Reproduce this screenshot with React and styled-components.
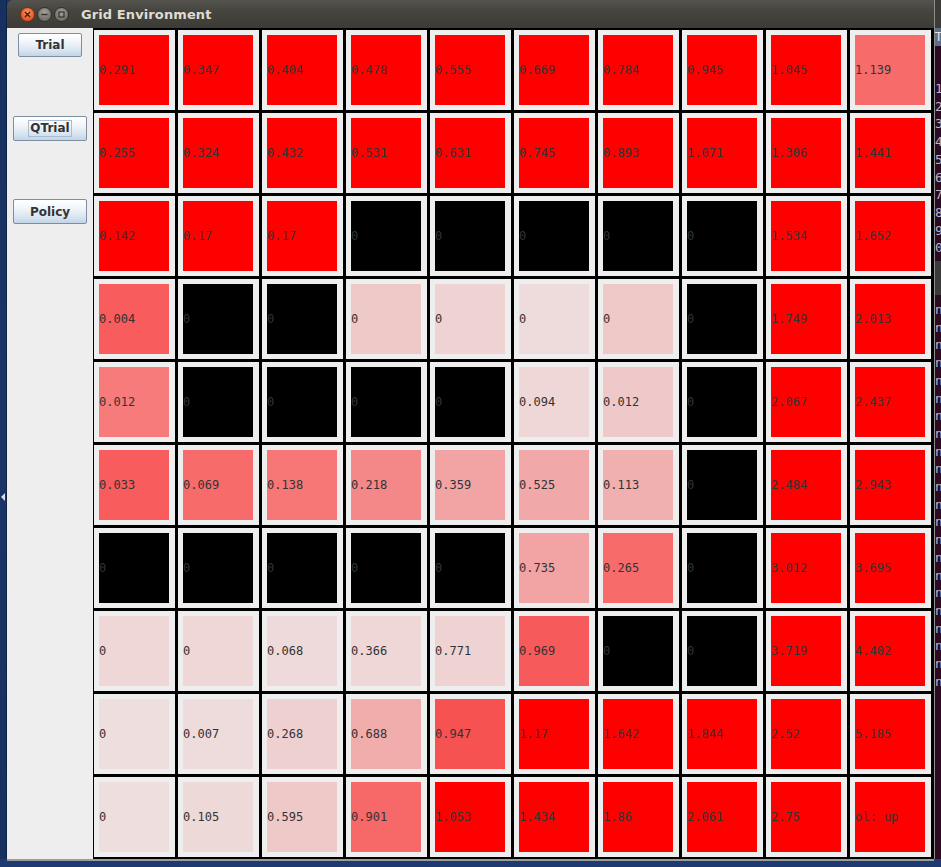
import React from "react";
import styled, { createGlobalStyle } from "styled-components";

const Global = createGlobalStyle`
  html, body { margin: 0; padding: 0; background: #1a3263; }
  #root { width: 941px; height: 867px; overflow: hidden; }
`;

const R = "#ff0000";
const B = "#000000";

const colors = [
  [R, R, R, R, R, R, R, R, R, "#f76b6b"],
  [R, R, R, R, R, R, R, R, R, R],
  [R, R, R, B, B, B, B, B, R, R],
  ["#f85c5c", B, B, "#efc8c8", "#efd3d3", "#eedcdc", "#efc8c8", B, R, R],
  ["#f77b7b", B, B, B, B, "#efd7d7", "#efc9c9", B, R, R],
  ["#f85c5c", "#f76b6b", "#f77676", "#f48888", "#f2a4a4", "#f0a8a8", "#f1b0b0", B, R, R],
  [B, B, B, B, B, "#f2a4a4", "#f76b6b", B, R, R],
  ["#efd7d7", "#efd7d7", "#eedada", "#efd7d7", "#efd3d3", "#f65a5a", B, B, R, R],
  ["#eedede", "#eedcdc", "#efd0d0", "#f1acac", "#f65252", R, R, R, R, R],
  ["#eedede", "#eed9d9", "#efc8c8", "#f76868", R, R, R, R, R, R],
];

const values = [
  ["0.291", "0.347", "0.404", "0.478", "0.555", "0.669", "0.784", "0.945", "1.045", "1.139"],
  ["0.255", "0.324", "0.432", "0.531", "0.631", "0.745", "0.893", "1.071", "1.306", "1.441"],
  ["0.142", "0.17", "0.17", "0", "0", "0", "0", "0", "1.534", "1.652"],
  ["0.004", "0", "0", "0", "0", "0", "0", "0", "1.749", "2.013"],
  ["0.012", "0", "0", "0", "0", "0.094", "0.012", "0", "2.067", "2.437"],
  ["0.033", "0.069", "0.138", "0.218", "0.359", "0.525", "0.113", "0", "2.484", "2.943"],
  ["0", "0", "0", "0", "0", "0.735", "0.265", "0", "3.012", "3.695"],
  ["0", "0", "0.068", "0.366", "0.771", "0.969", "0", "0", "3.719", "4.402"],
  ["0", "0.007", "0.268", "0.688", "0.947", "1.17", "1.642", "1.844", "2.52", "5.185"],
  ["0", "0.105", "0.595", "0.901", "1.053", "1.434", "1.86", "2.061", "2.75", "ol: up"],
];

const Screen = styled.div`
  width: 941px;
  height: 867px;
  display: flex;
  flex-direction: column;
  background: linear-gradient(180deg, #1c3668 0%, #1a3263 60%, #1d3a72 100%);
  overflow: hidden;
`;

const Main = styled.div`
  display: flex;
  height: 859px;
`;

const DesktopEdge = styled.div`
  width: 7px;
  flex: none;
  position: relative;
  background: linear-gradient(180deg, #17305f, #1a3468 50%, #17305f);
  border-right: 1px solid #0f2248;
  box-sizing: border-box;
`;

const Arrow = styled.div`
  position: absolute;
  left: 1px;
  top: 493px;
  width: 0;
  height: 0;
  border-top: 4px solid transparent;
  border-bottom: 4px solid transparent;
  border-right: 4px solid #d8dde6;
`;

const Window = styled.div`
  width: 927px;
  flex: none;
  display: flex;
  flex-direction: column;
`;

const TitleBar = styled.div`
  height: 28px;
  display: flex;
  align-items: center;
  padding-left: 13px;
  background: linear-gradient(180deg, #55534e 0%, #46443f 40%, #3c3b37 100%);
  border-top-left-radius: 6px;
  box-sizing: border-box;
`;

const WinButtons = styled.div`
  display: flex;
  align-items: center;
  gap: 2px;
  margin-right: 12px;
`;

const WinButton = styled.div`
  width: 15px;
  height: 15px;
  border-radius: 50%;
  display: flex;
  align-items: center;
  justify-content: center;
  box-sizing: border-box;
  border: 1px solid ${(p) => (p.$close ? "#7a2c10" : "#2f2e2a")};
  background: ${(p) =>
    p.$close
      ? "radial-gradient(circle at 50% 35%, #f59a6e 0%, #ef6a34 45%, #c9471a 100%)"
      : "radial-gradient(circle at 50% 35%, #a5a39c 0%, #7f7d76 50%, #5e5d57 100%)"};
`;

const Title = styled.div`
  font-family: "DejaVu Sans", sans-serif;
  font-weight: bold;
  font-size: 13px;
  color: #dfdbd2;
  letter-spacing: 0.1px;
`;

const Content = styled.div`
  display: flex;
  height: 831px;
`;

const SidePanel = styled.div`
  width: 86px;
  flex: none;
  background: #eeeeee;
  display: flex;
  flex-direction: column;
`;

const Slot = styled.div`
  height: 83px;
  display: flex;
  justify-content: center;
  align-items: flex-start;
  padding-top: 5px;
  box-sizing: border-box;
`;

const Button = styled.button`
  width: ${(p) => p.$w}px;
  height: ${(p) => p.$h}px;
  padding: 0;
  margin: 0;
  display: flex;
  align-items: center;
  justify-content: center;
  border: 1px solid #7d8ea0;
  border-radius: 2px;
  background: linear-gradient(180deg, #ffffff 0%, #f2f6fa 35%, #d8e4f0 75%, #c2d4e6 100%);
  font-family: "DejaVu Sans", sans-serif;
  font-weight: bold;
  font-size: 12px;
  color: #333333;
  box-sizing: border-box;
  cursor: pointer;
`;

const Focus = styled.span`
  border: 1px solid #a9bcd0;
  padding: 1px 1px 1px 1px;
  line-height: 13px;
`;

const Board = styled.div`
  width: 841px;
  height: 831px;
  box-sizing: border-box;
  padding: 2px 3px 2px 1px;
  background: #000;
  display: grid;
  grid-template-columns: repeat(10, 81px);
  grid-template-rows: repeat(10, 80px);
  gap: 3px;
`;

const Cell = styled.div`
  background: #eeeeee;
  padding: 5px 6px 5px 5px;
  box-sizing: border-box;
`;

const Swatch = styled.div`
  width: 70px;
  height: 70px;
  display: flex;
  align-items: center;
  background: ${(p) => p.$bg};
  font-family: "DejaVu Sans Mono", monospace;
  font-size: 12px;
  color: #333333;
  white-space: nowrap;
  overflow: hidden;
`;

const TerminalEdge = styled.div`
  flex: 1;
  display: flex;
  flex-direction: column;
  border-left: 1px solid #8e8e8a;
  background: #2c0a24;
  overflow: hidden;
`;

const TermTitle = styled.div`
  height: 28px;
  background: #3c3b37;
  flex: none;
`;

const TermTab = styled.div`
  height: 18px;
  background: #5d6f86;
  color: #e6e6e6;
  font-family: "DejaVu Sans", sans-serif;
  font-size: 12px;
  line-height: 18px;
  flex: none;
`;

const TermLines = styled.div`
  padding-top: 34px;
  font-family: "DejaVu Sans Mono", monospace;
  font-size: 13px;
  line-height: 17.7px;
  color: #b8b4c6;
  white-space: pre;
`;

const TermSep = styled.div`
  height: 34px;
  background: #3a3a3a;
  margin: 4px 0 6px;
`;

const DesktopBottom = styled.div`
  flex: 1;
  border-top: 2px solid #9c9c9c;
  margin-left: 7px;
  width: 927px;
  box-sizing: border-box;
`;

export default function App() {
  const digits = ["1", "2", "3", "4", "5", "6", "7", "8", "9", "0"];
  const ns = Array.from({ length: 22 }, () => "n");
  return (
    <>
      <Global />
      <Screen>
        <Main>
          <DesktopEdge>
            <Arrow />
          </DesktopEdge>
          <Window>
            <TitleBar>
              <WinButtons>
                <WinButton $close>
                  <svg width="7" height="7" viewBox="0 0 7 7">
                    <path d="M1 1L6 6M6 1L1 6" stroke="#4a1a08" strokeWidth="1.4" />
                  </svg>
                </WinButton>
                <WinButton>
                  <svg width="7" height="7" viewBox="0 0 7 7">
                    <path d="M0.5 3.5H6.5" stroke="#33322e" strokeWidth="1.4" />
                  </svg>
                </WinButton>
                <WinButton>
                  <svg width="7" height="7" viewBox="0 0 7 7">
                    <rect x="1" y="1" width="5" height="5" fill="none" stroke="#33322e" strokeWidth="1.2" />
                  </svg>
                </WinButton>
              </WinButtons>
              <Title>Grid Environment</Title>
            </TitleBar>
            <Content>
              <SidePanel>
                <Slot>
                  <Button $w={64} $h={24}>Trial</Button>
                </Slot>
                <Slot>
                  <Button $w={74} $h={25}>
                    <Focus>QTrial</Focus>
                  </Button>
                </Slot>
                <Slot>
                  <Button $w={74} $h={25}>Policy</Button>
                </Slot>
              </SidePanel>
              <Board>
                {values.map((row, r) =>
                  row.map((v, c) => (
                    <Cell key={`${r}-${c}`}>
                      <Swatch $bg={colors[r][c]}>{v}</Swatch>
                    </Cell>
                  ))
                )}
              </Board>
            </Content>
          </Window>
          <TerminalEdge>
            <TermTitle />
            <TermTab>T</TermTab>
            <TermLines>{digits.join("\n")}</TermLines>
            <TermSep />
            <TermLines style={{ paddingTop: 0 }}>{ns.join("\n")}</TermLines>
          </TerminalEdge>
        </Main>
        <DesktopBottom />
      </Screen>
    </>
  );
}
